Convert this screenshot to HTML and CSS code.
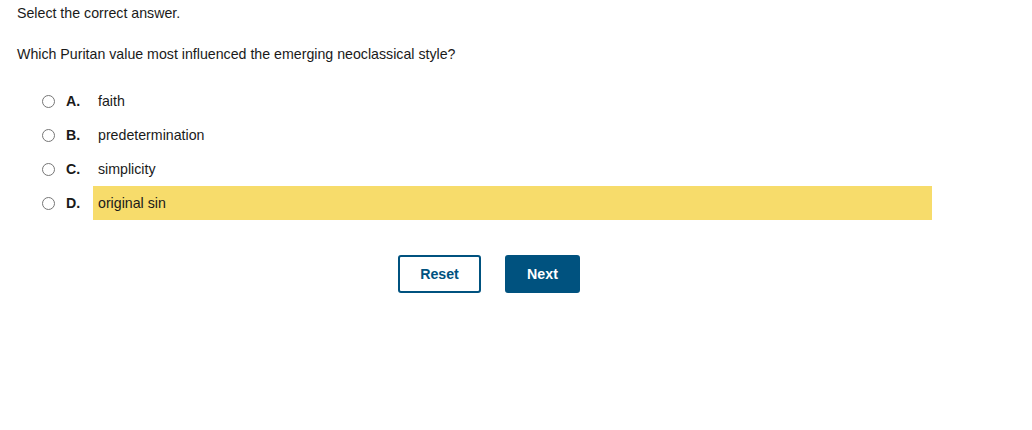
FILE: index.html
```html
<!DOCTYPE html>
<html>
<head>
<meta charset="utf-8">
<link rel="stylesheet" href="styles.css">
</head>
<body>
<div class="page">
  <p class="instr">Select the correct answer.</p>
  <p class="question">Which Puritan value most influenced the emerging neoclassical style?</p>
  <div class="options">
    <label class="opt"><span class="radio"></span><span class="letter">A.</span><span class="text">faith</span></label>
    <label class="opt"><span class="radio"></span><span class="letter">B.</span><span class="text">predetermination</span></label>
    <label class="opt"><span class="radio"></span><span class="letter">C.</span><span class="text">simplicity</span></label>
    <label class="opt"><span class="radio"></span><span class="letter">D.</span><span class="text hl">original sin</span></label>
  </div>
  <div class="buttons">
    <button class="btn reset">Reset</button>
    <button class="btn next">Next</button>
  </div>
</div>
</body>
</html>
```
FILE: styles.css
```css
html, body { margin: 0; padding: 0; background: #fff; }
body { font-family: "Liberation Sans", Arial, sans-serif; font-size: 14.2px; color: #1a1a1a; }
.page { padding: 5px 0 0 17px; }
.instr { margin: 0; line-height: 16px; }
.question { margin: 25px 0 0 0; line-height: 16px; }
.options { margin-top: 22px; display: flex; flex-direction: column; width: 915px; }
.opt { display: flex; align-items: center; height: 34px; }
.radio { width: 11px; height: 11px; border: 1px solid #767676; border-radius: 50%; margin-left: 25px; flex: none; }
.letter { font-weight: bold; margin-left: 11px; width: 27px; }
.text { flex: 1; height: 34px; display: flex; align-items: center; padding-left: 5px; }
.hl { background: #f7dc6b; }
.buttons { display: flex; gap: 24px; margin-top: 35px; padding-left: 381px; }
.btn { font-family: "Liberation Sans", Arial, sans-serif; font-size: 14.2px; font-weight: bold; height: 38px; border-radius: 3px; border: 2px solid #00527f; cursor: pointer; }
.reset { width: 83px; background: #fff; color: #00527f; }
.next { width: 75px; background: #00527f; color: #fff; }
```
